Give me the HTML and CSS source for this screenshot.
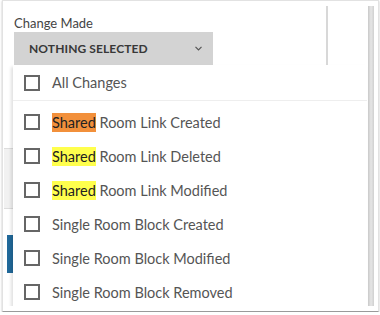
FILE: index.html
```html
<!DOCTYPE html>
<html lang="en">
<head>
    <meta charset="UTF-8">
    <title>Change Made filter</title>
    <link rel="stylesheet" href="styles.css">
</head>
<body>
    <div class="frame">
        <div class="viewport">
            <div class="page">
                <div class="filter-col">
                    <label class="field-label">Change Made</label>
                    <div class="select">
                        <span>NOTHING SELECTED</span>
                        <svg class="chevron" width="7" height="5" viewBox="0 0 7 5"><path d="M0.5 0.8 L3.5 3.8 L6.5 0.8" fill="none" stroke="#555" stroke-width="1.2"/></svg>
                    </div>
                </div>
                <div class="divider-col"></div>
            </div>
            <div class="side-box"></div>
            <div class="side-tab"></div>

            <div class="dropdown">
                <div class="option all">
                    <span class="box"></span>All Changes
                </div>
                <div class="option-list">
                    <div class="option"><span class="box"></span><span><mark class="hl current">Shared</mark> Room Link Created</span></div>
                    <div class="option"><span class="box"></span><span><mark class="hl">Shared</mark> Room Link Deleted</span></div>
                    <div class="option"><span class="box"></span><span><mark class="hl">Shared</mark> Room Link Modified</span></div>
                    <div class="option"><span class="box"></span>Single Room Block Created</div>
                    <div class="option"><span class="box"></span>Single Room Block Modified</div>
                    <div class="option"><span class="box"></span>Single Room Block Removed</div>
                </div>
            </div>
            <div class="scrollbar"></div>
        </div>
    </div>
</body>
</html>
```

FILE: styles.css
```css
body {
    margin: 0;
    background: #fff;
    font-family: Lato, "Open Sans", sans-serif;
}

.frame {
    position: relative;
    margin-left: 2px;
    width: 375px;
    height: 310px;
    border: 1px solid #e2e2e2;
    border-bottom-color: #9a9a9a;
    box-shadow: 0 1px 2px rgba(0, 0, 0, 0.25);
    background: #fff;
}

.viewport {
    position: relative;
    height: 300px;
    margin-top: 5px;
    overflow: hidden;
}

.page {
    display: flex;
    padding-left: 11px;
}

.filter-col {
    width: 312px;
}

.field-label {
    display: block;
    font-size: 13px;
    color: #444;
    padding-top: 9px;
    height: 17px;
}

.select {
    display: flex;
    align-items: center;
    justify-content: space-between;
    width: 173px;
    height: 33px;
    padding: 0 11px 0 15px;
    background: #d3d3d3;
    font-size: 12px;
    font-weight: bold;
    color: #383838;
    letter-spacing: 0.1px;
}

.divider-col {
    width: 2px;
    height: 59px;
    background: #d8d8d8;
}

.side-box {
    position: absolute;
    left: 1px;
    top: 142px;
    width: 10px;
    height: 59px;
    background: #f1f1f1;
    border-top: 1px solid #ddd;
    border-bottom: 1px solid #ddd;
}

.side-tab {
    position: absolute;
    left: 4px;
    top: 229px;
    width: 7px;
    height: 38px;
    background: #21699a;
}

.dropdown {
    position: absolute;
    left: 10px;
    top: 59px;
    width: 354px;
    background: #fff;
    box-shadow: -2px 2px 3px rgba(0, 0, 0, 0.12);
    color: #555;
    font-size: 14.5px;
}

.option {
    display: flex;
    align-items: center;
    height: 34px;
    padding-left: 11px;
}

.option.all {
    height: 35px;
    border-bottom: 1px solid #eee;
}

.option-list {
    padding-top: 4px;
}

.box {
    width: 12px;
    height: 12px;
    border: 2px solid #666;
    margin-right: 12px;
    flex-shrink: 0;
}

.hl {
    background: #ffff4d;
    color: #222;
    padding: 1px 0;
}

.hl.current {
    background: #f2903b;
}

.scrollbar {
    position: absolute;
    right: 4px;
    top: 0;
    width: 6px;
    height: 300px;
    background: linear-gradient(to right, #c8c8c8, #e6e6e6 50%, #d0d0d0);
}
```
